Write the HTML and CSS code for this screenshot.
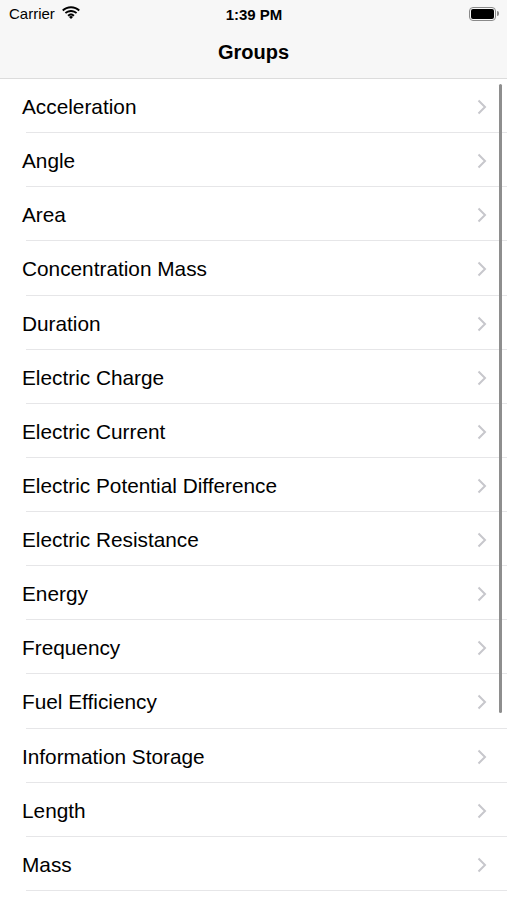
FILE: index.html
```html
<!DOCTYPE html>
<html lang="en">
<head>
    <meta charset="UTF-8">
    <meta name="viewport" content="width=device-width, initial-scale=1.0">
    <title>Groups</title>
    <link rel="stylesheet" href="styles.css">
</head>
<body>
    <header class="top">
        <div class="status">
            <div class="status-left">
                <span>Carrier</span>
                <svg class="wifi" width="18" height="13" viewBox="0 0 18 13">
                    <path d="M9 2.2c2.9 0 5.6 1.1 7.6 3l1.3-1.4C15.5 1.5 12.4.2 9 .2S2.5 1.5.1 3.8l1.3 1.4c2-1.9 4.7-3 7.6-3z" fill="#000"/>
                    <path d="M9 5.9c1.9 0 3.6.7 4.9 1.9l1.3-1.4C13.6 4.9 11.4 3.9 9 3.9S4.4 4.9 2.8 6.4l1.3 1.4C5.4 6.6 7.1 5.9 9 5.9z" fill="#000"/>
                    <path d="M9 9.5c.9 0 1.7.3 2.3.9l1.3-1.4C11.6 8.1 10.4 7.5 9 7.5s-2.6.6-3.6 1.5l1.3 1.4c.6-.6 1.4-.9 2.3-.9z" fill="#000"/>
                    <path d="M9 13l2-2.1c-.5-.5-1.2-.8-2-.8s-1.5.3-2 .8z" fill="#000"/>
                </svg>
            </div>
            <div class="time">1:39 PM</div>
            <div class="status-right">
                <div class="battery"><div class="battery-fill"></div></div>
                <div class="battery-nub"></div>
            </div>
        </div>
        <div class="navbar">Groups</div>
    </header>

    <main class="list">
        <div class="row"><span>Acceleration</span><svg class="chev" width="10" height="16" viewBox="0 0 10 16"><path d="M1.5 1.5 8 8l-6.5 6.5"/></svg></div>
        <div class="row"><span>Angle</span><svg class="chev" width="10" height="16" viewBox="0 0 10 16"><path d="M1.5 1.5 8 8l-6.5 6.5"/></svg></div>
        <div class="row"><span>Area</span><svg class="chev" width="10" height="16" viewBox="0 0 10 16"><path d="M1.5 1.5 8 8l-6.5 6.5"/></svg></div>
        <div class="row"><span>Concentration Mass</span><svg class="chev" width="10" height="16" viewBox="0 0 10 16"><path d="M1.5 1.5 8 8l-6.5 6.5"/></svg></div>
        <div class="row"><span>Duration</span><svg class="chev" width="10" height="16" viewBox="0 0 10 16"><path d="M1.5 1.5 8 8l-6.5 6.5"/></svg></div>
        <div class="row"><span>Electric Charge</span><svg class="chev" width="10" height="16" viewBox="0 0 10 16"><path d="M1.5 1.5 8 8l-6.5 6.5"/></svg></div>
        <div class="row"><span>Electric Current</span><svg class="chev" width="10" height="16" viewBox="0 0 10 16"><path d="M1.5 1.5 8 8l-6.5 6.5"/></svg></div>
        <div class="row"><span>Electric Potential Difference</span><svg class="chev" width="10" height="16" viewBox="0 0 10 16"><path d="M1.5 1.5 8 8l-6.5 6.5"/></svg></div>
        <div class="row"><span>Electric Resistance</span><svg class="chev" width="10" height="16" viewBox="0 0 10 16"><path d="M1.5 1.5 8 8l-6.5 6.5"/></svg></div>
        <div class="row"><span>Energy</span><svg class="chev" width="10" height="16" viewBox="0 0 10 16"><path d="M1.5 1.5 8 8l-6.5 6.5"/></svg></div>
        <div class="row"><span>Frequency</span><svg class="chev" width="10" height="16" viewBox="0 0 10 16"><path d="M1.5 1.5 8 8l-6.5 6.5"/></svg></div>
        <div class="row"><span>Fuel Efficiency</span><svg class="chev" width="10" height="16" viewBox="0 0 10 16"><path d="M1.5 1.5 8 8l-6.5 6.5"/></svg></div>
        <div class="row"><span>Information Storage</span><svg class="chev" width="10" height="16" viewBox="0 0 10 16"><path d="M1.5 1.5 8 8l-6.5 6.5"/></svg></div>
        <div class="row"><span>Length</span><svg class="chev" width="10" height="16" viewBox="0 0 10 16"><path d="M1.5 1.5 8 8l-6.5 6.5"/></svg></div>
        <div class="row"><span>Mass</span><svg class="chev" width="10" height="16" viewBox="0 0 10 16"><path d="M1.5 1.5 8 8l-6.5 6.5"/></svg></div>
        <div class="scroll-thumb"></div>
    </main>
</body>
</html>
```

FILE: styles.css
```css
body {
    margin: 0;
    padding: 0;
    background-color: #fff;
    font-family: "Liberation Sans", Arial, sans-serif;
    color: #000;
    overflow: hidden;
}

.top {
    background-color: #f7f7f7;
    border-bottom: 1px solid #dcdcdc;
}

.status {
    height: 25px;
    display: flex;
    align-items: center;
    justify-content: space-between;
    padding: 0 8px 0 9px;
    font-size: 15px;
}

.status-left {
    display: flex;
    align-items: center;
    gap: 7px;
    width: 120px;
    margin-top: 2px;
}

.wifi {
    margin-top: -3px;
}

.time {
    font-weight: bold;
    font-size: 15px;
    margin-top: 4px;
}

.status-right {
    width: 120px;
    display: flex;
    justify-content: flex-end;
    align-items: center;
    margin-top: 2px;
}

.battery {
    width: 23px;
    height: 10px;
    border: 1.5px solid #8a8a8a;
    border-radius: 4px;
    padding: 1px;
}

.battery-fill {
    width: 100%;
    height: 100%;
    background-color: #000;
    border-radius: 2px;
}

.battery-nub {
    width: 2px;
    height: 5px;
    background-color: #8a8a8a;
    border-radius: 0 2px 2px 0;
    margin-left: 1px;
}

.navbar {
    height: 53px;
    box-sizing: border-box;
    display: flex;
    align-items: center;
    justify-content: center;
    font-size: 20px;
    font-weight: bold;
    padding-top: 2px;
}

.list {
    position: relative;
}

.row {
    height: 54.14px;
    box-sizing: border-box;
    display: flex;
    align-items: center;
    justify-content: space-between;
    padding: 2px 20px 0 22px;
    font-size: 20.8px;
    position: relative;
}

.row::after {
    content: "";
    position: absolute;
    left: 26px;
    right: 0;
    bottom: 0;
    height: 1px;
    background-color: #e6e6e8;
}

.chev {
    fill: none;
    stroke: #c7c7cc;
    stroke-width: 2;
}

.scroll-thumb {
    position: absolute;
    right: 5px;
    top: 5px;
    width: 3px;
    height: 629px;
    border-radius: 2px;
    background-color: #8e8e8e;
}
```
